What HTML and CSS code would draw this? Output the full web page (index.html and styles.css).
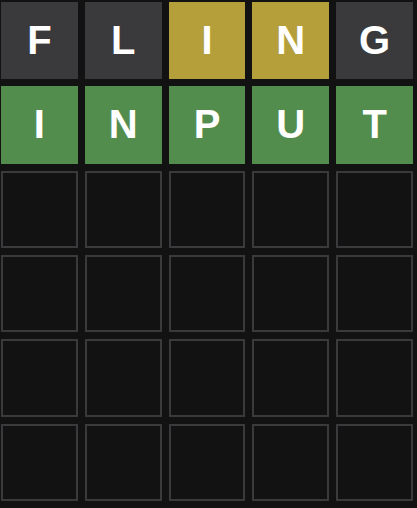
FILE: index.html
```html
<!DOCTYPE html>
<html lang="en">
<head>
  <meta charset="UTF-8" />
  <title>Wordle</title>
  <meta name="viewport" content="width=device-width, initial-scale=1" />
  <link rel="stylesheet" href="styles.css">
</head>
<body>
  <div class="board">
    <div class="row">
      <div class="tile absent">F</div>
      <div class="tile absent">L</div>
      <div class="tile present">I</div>
      <div class="tile present">N</div>
      <div class="tile absent">G</div>
    </div>
    <div class="row">
      <div class="tile correct">I</div>
      <div class="tile correct">N</div>
      <div class="tile correct">P</div>
      <div class="tile correct">U</div>
      <div class="tile correct">T</div>
    </div>
    <div class="row">
      <div class="tile"></div><div class="tile"></div><div class="tile"></div><div class="tile"></div><div class="tile"></div>
    </div>
    <div class="row">
      <div class="tile"></div><div class="tile"></div><div class="tile"></div><div class="tile"></div><div class="tile"></div>
    </div>
    <div class="row">
      <div class="tile"></div><div class="tile"></div><div class="tile"></div><div class="tile"></div><div class="tile"></div>
    </div>
    <div class="row">
      <div class="tile"></div><div class="tile"></div><div class="tile"></div><div class="tile"></div><div class="tile"></div>
    </div>
  </div>
</body>
</html>
```
FILE: styles.css
```css
* {
  box-sizing: border-box;
}

html, body {
  margin: 0;
  padding: 0;
  background: #121213;
  font-family: "Liberation Sans", Arial, sans-serif;
}

.board {
  width: 417px;
  height: 508px;
  padding: 2px 4px 7px 1px;
  display: grid;
  grid-template-rows: repeat(6, 1fr);
  gap: 7px;
}

.row {
  display: grid;
  grid-template-columns: repeat(5, 1fr);
  gap: 7px;
}

.tile {
  display: flex;
  justify-content: center;
  align-items: center;
  border: 2px solid #3a3a3c;
  color: #fff;
  font-size: 40px;
  font-weight: bold;
  text-transform: uppercase;
}

.absent {
  background: #3a3a3c;
  border-color: #3a3a3c;
}

.present {
  background: #b59f3b;
  border-color: #b59f3b;
}

.correct {
  background: #538d4e;
  border-color: #538d4e;
}
```
